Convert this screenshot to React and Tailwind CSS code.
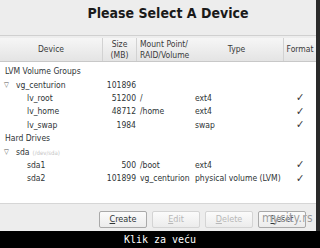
import React from "react";

const rows = [
  { kind: "group", label: "LVM Volume Groups" },
  { kind: "parent", label: "vg_centurion", size: "101896" },
  { kind: "child", label: "lv_root", size: "51200", mount: "/", type: "ext4", fmt: true },
  { kind: "child", label: "lv_home", size: "48712", mount: "/home", type: "ext4", fmt: true },
  { kind: "child", label: "lv_swap", size: "1984", mount: "", type: "swap", fmt: true },
  { kind: "group", label: "Hard Drives" },
  { kind: "parent", label: "sda", sub: "(/dev/sda)" },
  { kind: "child", label: "sda1", size: "500", mount: "/boot", type: "ext4", fmt: true },
  { kind: "child", label: "sda2", size: "101899", mount: "vg_centurion", type: "physical volume (LVM)", fmt: true },
];

function Row({ row }) {
  return (
    <div className="flex h-[13.4px] items-center whitespace-nowrap text-[#2e3436]">
      <div className="flex w-[103px] items-center">
        {row.kind === "group" && <span className="pl-[5px]">{row.label}</span>}
        {row.kind === "parent" && (
          <>
            <span className="w-[16px] pl-[4px] text-[7px] text-[#555]">▽</span>
            <span>{row.label}</span>
            {row.sub && <span className="ml-[3px] text-[6px] text-[#c4c4c4]">{row.sub}</span>}
          </>
        )}
        {row.kind === "child" && <span className="pl-[27px]">{row.label}</span>}
      </div>
      <div className="w-[33px] text-right">{row.size}</div>
      <div className="w-[54px] pl-[4px]">{row.mount}</div>
      <div className="w-[94px] pl-[5px]">{row.type}</div>
      <div className="w-[32px] pl-[12px] text-[11px] text-[#333]">{row.fmt ? "✓" : ""}</div>
    </div>
  );
}

function Btn({ label, disabled, u }) {
  return (
    <div
      className={
        "flex h-[17px] w-[48px] items-center justify-center rounded-[2px] border bg-gradient-to-b from-[#fbfbfb] to-[#ececec] text-[9px] " +
        (disabled ? "border-[#d4d4d4] text-[#b8b8b8]" : "border-[#a9a9a9] text-[#2e3436]")
      }
    >
      <span className="underline decoration-[0.5px] underline-offset-1">{u}</span>
      {label}
    </div>
  );
}

export default function App() {
  return (
    <div className="flex h-[248px] w-[320px] flex-col bg-black font-['DejaVu_Sans_Condensed','DejaVu_Sans',sans-serif]">
      <div className="flex h-[231px] bg-[#ededed]">
        <div className="flex w-[316px] flex-col">
          <div className="flex h-[27px] items-center justify-center pl-[20px] text-[14px] font-bold text-[#1a1a1a]">
            Please Select A Device
          </div>
          <div className="mt-[8px] h-px bg-[#d0d0d0]" />
          <div className="h-[2px]" />
          <div className="flex h-[24px] border-b border-[#c8c8c8] bg-gradient-to-b from-[#f6f6f6] to-[#e4e4e4] text-[8.5px] text-[#3a3a3a]">
            <div className="flex w-[103px] items-center justify-center border-r border-[#d2d2d2]">Device</div>
            <div className="flex w-[34px] flex-col items-center justify-center border-r border-[#d2d2d2] leading-[11px]">
              <span>Size</span>
              <span>(MB)</span>
            </div>
            <div className="flex w-[53px] flex-col justify-center whitespace-nowrap pl-[3px] leading-[11px]">
              <span>Mount Point/</span>
              <span>RAID/Volume</span>
            </div>
            <div className="flex w-[94px] items-center justify-center border-r border-[#d2d2d2]">Type</div>
            <div className="flex w-[32px] items-center justify-center">Format</div>
          </div>
          <div className="h-[141px] bg-white pt-[3px] text-[8.5px]">
            {rows.map((r, i) => (
              <Row key={i} row={r} />
            ))}
          </div>
          <div className="h-px bg-[#d6d6d6]" />
          <div className="relative flex gap-[5px] pl-[99px] pt-[7px]">
            <Btn label="reate" u="C" />
            <Btn label="dit" u="E" disabled />
            <Btn label="elete" u="D" disabled />
            <Btn label="eset" u="R" />
            <span className="absolute left-[262px] top-[5px] text-[12px] tracking-[0.3px] text-[#9a9a9a] [text-shadow:0_0_1px_#fff]">
              mycity.rs
            </span>
          </div>
        </div>
        <div className="w-[4px] bg-[#2a2a2a]" />
      </div>
      <div className="flex flex-1 items-center justify-center font-['DejaVu_Sans_Mono',monospace] text-[10px] text-white">
        Klik za veću
      </div>
    </div>
  );
}
